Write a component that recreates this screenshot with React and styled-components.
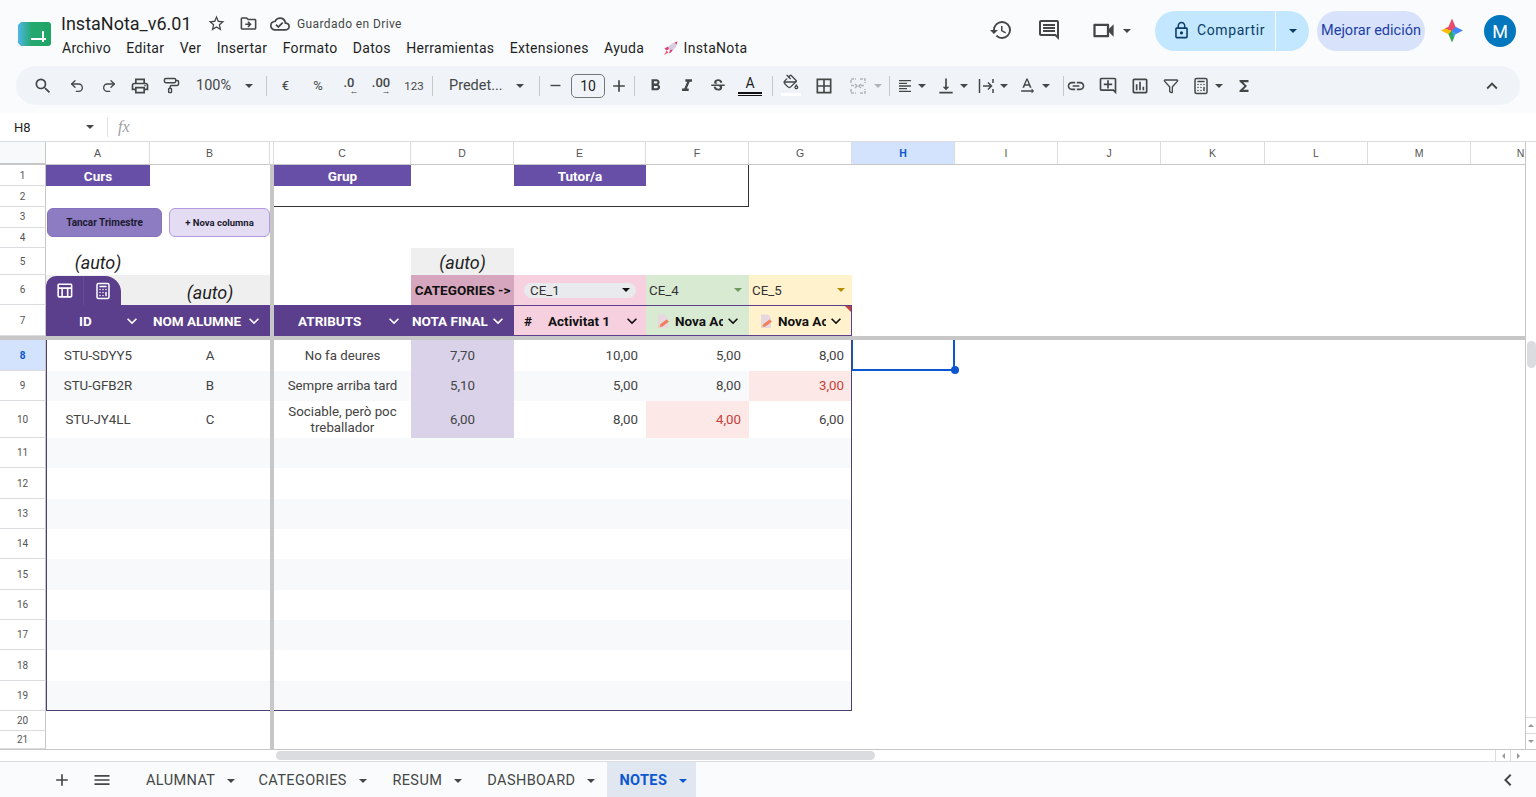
import React from "react";
import styled, { createGlobalStyle } from "styled-components";
import {
  MdSearch, MdOutlinePrint, MdFormatBold, MdFormatItalic,
  MdStrikethroughS, MdBorderAll, MdFormatAlignLeft, MdVerticalAlignBottom,
  MdTextRotationNone, MdLink, MdOutlineAddComment, MdOutlineInsertChart,
  MdFunctions, MdExpandLess, MdExpandMore, MdHistory, MdOutlineComment,
  MdOutlineVideocam, MdLockOutline, MdStarBorder, MdOutlineDriveFileMove, MdOutlineCloudDone,
  MdAdd, MdMenu, MdChevronLeft, MdRemove, MdOutlineTableChart,
} from "react-icons/md";
import { Undo2, Redo2, PaintRoller, PaintBucket, Calculator, Filter } from "lucide-react";

const GlobalStyle = createGlobalStyle`
  html, body { margin: 0; height: 100%; overflow: hidden; background: #f9fbfd; }
  * { box-sizing: border-box; }
  #root { height: 797px; font-family: Roboto, "Liberation Sans", sans-serif; color: #444746; }
`;

const Page = styled.div`
  width: 1536px;
  height: 797px;
  display: flex;
  flex-direction: column;
  overflow: hidden;
`;

/* top bar */
const Header = styled.header`
  height: 66px;
  flex: none;
  display: flex;
  align-items: flex-start;
  padding-left: 17px;
`;
const Logo = styled.svg`
  width: 35px;
  height: 26px;
  margin: 21px 9px 0 0;
  flex: none;
`;
const TitleBlock = styled.div`
  padding-top: 12px;
`;
const TitleRow = styled.div`
  display: flex;
  align-items: center;
  height: 23px;
`;
const DocTitle = styled.div`
  font-size: 18px;
  color: #1f1f1f;
  width: 146px;
`;
const TitleIcon = styled.span`
  display: flex;
  font-size: ${(p) => p.$size || 19}px;
  width: ${(p) => p.$w}px;
  color: #444746;
`;
const SavedText = styled.span`
  font-size: 12px;
  letter-spacing: 0.4px;
  color: #444746;
`;
const MenuRow = styled.nav`
  display: flex;
  align-items: center;
  height: 24px;
  margin-top: 1px;
  gap: 15.4px;
  font-size: 14px;
  letter-spacing: 0.3px;
  color: #1f1f1f;
  padding-left: 1px;
`;
const RocketItem = styled.span`
  display: flex;
  align-items: center;
  gap: 5px;
  margin-left: 3px;
`;
const HeaderRight = styled.div`
  margin-left: auto;
  display: flex;
  align-items: center;
  height: 40px;
  margin-top: 11px;
  padding-right: 20px;
`;
const HeaderIcon = styled.span`
  display: flex;
  justify-content: center;
  font-size: ${(p) => p.$size || 24}px;
  color: #444746;
  width: ${(p) => p.$w}px;
  margin: -2px ${(p) => p.$mr || 0}px 0 0;
`;
const ShareButton = styled.div`
  width: 154px;
  height: 40px;
  display: flex;
  align-items: center;
  background: #c2e7ff;
  border-radius: 20px;
  color: #001d35;
  font-size: 14px;
  letter-spacing: 0.6px;
  margin-left: 24px;
`;
const ShareMain = styled.div`
  width: 121px;
  height: 40px;
  display: flex;
  align-items: center;
  gap: 6px;
  padding: 0 0 2px 17px;
  border-right: 1px solid #f4faff;
  color: #0b3d66;
  svg { font-size: 19px; }
`;
const ShareCaret = styled.div`
  flex: 1;
  display: flex;
  justify-content: center;
`;
const ImproveButton = styled.div`
  width: 108px;
  height: 40px;
  margin-left: 8px;
  padding-bottom: 1px;
  border-radius: 20px;
  background: #d9e2fb;
  color: #1a3fa8;
  font-size: 14.5px;
  display: flex;
  align-items: center;
  justify-content: center;
  white-space: nowrap;
`;
const GeminiStar = styled.span`
  width: 22px;
  height: 24px;
  margin: -1px 21px 0 16px;
  background: conic-gradient(#ea4b6b 0 40deg, #4285f4 40deg 120deg, #3aa6e8 120deg 165deg, #34a853 165deg 230deg, #fbbc04 230deg 290deg, #ea4b6b 290deg);
  clip-path: polygon(50% 0, 66% 34%, 100% 50%, 66% 66%, 50% 100%, 34% 66%, 0 50%, 34% 34%);
`;
const Avatar = styled.div`
  width: 32px;
  height: 32px;
  border-radius: 50%;
  background: #0277bd;
  color: #fff;
  font-size: 18px;
  display: flex;
  align-items: center;
  justify-content: center;
`;

/* toolbar */
const Toolbar = styled.div`
  height: 39px;
  flex: none;
  margin: 0 16px;
  border-radius: 20px;
  background: #f0f4f9;
  display: flex;
  align-items: center;
  padding-left: 10px;
`;
const Tool = styled.span`
  flex: none;
  width: ${(p) => p.$w || 32}px;
  height: 28px;
  margin-left: ${(p) => p.$ml || 0}px;
  display: flex;
  align-items: center;
  justify-content: ${(p) => p.$start ? "flex-start" : "center"};
  padding-left: ${(p) => p.$pad || 0}px;
  font-size: ${(p) => p.$size || 20}px;
  color: #444746;
`;
const ToolText = styled.span`
  font-size: ${(p) => p.$size || 14}px;
  color: #444746;
`;
const Sep = styled.span`
  flex: none;
  width: 1px;
  height: 20px;
  background: #c7c7c7;
  margin: 0 ${(p) => p.$m || 0}px 0 ${(p) => p.$l ?? p.$m ?? 0}px;
`;
const Caret = styled.span`
  flex: none;
  width: 0;
  height: 0;
  border-left: 4px solid transparent;
  border-right: 4px solid transparent;
  border-top: 4px solid ${(p) => p.$color || "#444746"};
  margin-left: ${(p) => p.$ml || 0}px;
`;
const SizeBox = styled.span`
  width: 34px;
  height: 24px;
  flex: none;
  margin-left: 3px;
  border: 1px solid #747775;
  border-radius: 5px;
  font-size: 14px;
  display: flex;
  align-items: center;
  justify-content: center;
  color: #1f1f1f;
`;
const ColorLetter = styled.span`
  display: flex;
  flex-direction: column;
  align-items: center;
  font-size: 14px;
  line-height: 14px;
  color: #1f1f1f;
`;
const ColorBar = styled.span`
  width: 24px;
  height: 4px;
  border-top: 2px solid #111;
  border-bottom: 1px solid #111;
  margin-top: 2px;
`;
const FillIcon = styled.span`
  display: flex;
  flex-direction: column;
  align-items: center;
  margin-top: -1px;
`;
const WhiteBar = styled.span`
  width: 20px;
  height: 3px;
  margin-top: 3px;
  background: #fff;
`;
const DecimalTool = styled.span`
  display: flex;
  flex-direction: column;
  align-items: center;
  font-size: 13px;
  line-height: 11px;
  font-weight: 500;
`;
const TinyArrow = styled.span`
  font-size: 9px;
  line-height: 6px;
  margin-left: 10px;
`;

/* formula bar */
const FormulaBar = styled.div`
  height: 28px;
  flex: none;
  margin-top: 8px;
  background: #fff;
  display: flex;
  align-items: center;
  padding-left: 14px;
  font-size: 13px;
  color: #1f1f1f;
`;
const NameBox = styled.div`
  width: 80px;
  display: flex;
  align-items: center;
  justify-content: space-between;
`;
const FxLabel = styled.span`
  margin-left: 13px;
  padding-left: 10px;
  border-left: 1px solid #e3e3e3;
  font-family: "Liberation Serif", serif;
  font-style: italic;
  font-size: 16px;
  color: #9aa0a6;
  height: 20px;
  line-height: 20px;
`;

/* sheet */
const SheetArea = styled.div`
  flex: none;
  height: 608px;
  display: flex;
  background: #fff;
`;
const Sheet = styled.div`
  width: 1525px;
  overflow: hidden;
  display: grid;
  border-top: 1px solid #dadce0;
  grid-template-columns: 46px 104px 120px 4px 137px 103px 132px 103px 103px 103px 103px 103px 104px 103px 103px 100px;
  grid-template-rows: 23px 21px 21px 20.5px 20.5px 27px 30px 31px 4px 31px 30px 37px repeat(9, 30.35px) 20px 18px;
  font-size: 13.3px;
  color: #434343;
`;
const at = (p) => `grid-column: ${p.$c}; grid-row: ${p.$r};`;
const Corner = styled.div`
  ${at}
  background: #f8f9fa;
  border-right: 1px solid #c7c7c7;
  border-bottom: 2px solid #c7c7c7;
`;
const ColHead = styled.div`
  ${at}
  background: ${(p) => p.$active ? "#d3e3fd" : "#fff"};
  border-right: 1px solid #dadce0;
  border-bottom: 1px solid #c7c7c7;
  font-family: "Liberation Sans", sans-serif;
  font-size: 10.5px;
  font-weight: ${(p) => p.$active ? 700 : 400};
  color: ${(p) => p.$active ? "#0b57d0" : "#555"};
  display: flex;
  align-items: center;
  justify-content: center;
  overflow: hidden;
`;
const RowHead = styled.div`
  ${at}
  background: ${(p) => p.$active ? "#d3e3fd" : "#fff"};
  border-right: 1px solid #c7c7c7;
  border-bottom: 1px solid #dadce0;
  font-size: 10px;
  font-weight: ${(p) => p.$active ? 700 : 400};
  color: ${(p) => p.$active ? "#0b57d0" : "#555"};
  display: flex;
  align-items: center;
  justify-content: center;
`;
const Band = styled.div`
  ${at}
  background: #f8f9fa;
`;
const FreezeCol = styled.div`
  grid-column: 4;
  grid-row: 2 / -1;
  background: #c7c7c7;
  z-index: 3;
`;
const FreezeRow = styled.div`
  grid-column: 1 / -1;
  grid-row: 9;
  background: #c7c7c7;
  z-index: 3;
`;
const TitleCell = styled.div`
  ${at}
  background: #674ea7;
  color: #fff;
  font-weight: 700;
  font-size: 13.5px;
  display: flex;
  align-items: center;
  justify-content: center;
`;
const TopFrame = styled.div`
  grid-column: 5 / 9;
  grid-row: 2 / 4;
  border-right: 1px solid #333;
  border-bottom: 1px solid #333;
`;
const ButtonRow = styled.div`
  grid-column: 2 / 4;
  grid-row: 4 / 6;
  display: flex;
  align-items: flex-start;
  gap: 7px;
  padding: 1px 0 0 1px;
`;
const SheetButton = styled.div`
  width: ${(p) => p.$w}px;
  height: 29px;
  background: ${(p) => p.$light ? "#e3dcf2" : "#8e7cc3"};
  border: 1px solid ${(p) => p.$light ? "#b49ae0" : "#8470bd"};
  border-radius: 6px;
  color: #1a1a2e;
  font-size: ${(p) => p.$light ? 9.5 : 10}px;
  font-weight: 700;
  display: flex;
  align-items: center;
  justify-content: center;
  white-space: nowrap;
`;
const AutoCell = styled.div`
  ${at}
  background: ${(p) => p.$grey ? "#efefef" : "transparent"};
  font-style: italic;
  font-size: 18px;
  color: #1f1f1f;
  display: flex;
  align-items: flex-end;
  justify-content: center;
  line-height: 22px;
  padding-bottom: 1px;
`;
const IconTabCell = styled.div`
  ${at}
  background: #efefef;
  display: flex;
  align-items: flex-end;
`;
const IconTab = styled.div`
  width: 75px;
  height: 29px;
  background: #5b3f8c;
  border-radius: 10px 16px 0 0;
  display: flex;
  color: #fff;
  font-size: 19px;
`;
const IconTabItem = styled.span`
  flex: 1;
  display: flex;
  align-items: center;
  justify-content: center;
  & + & { border-left: 1px solid #65499a; }
`;
const HeadCell = styled.div`
  ${at}
  background: #5b3f8c;
  color: #fff;
  font-weight: 700;
  font-size: 13.5px;
  display: flex;
  align-items: center;
  justify-content: space-between;
  padding: 0 ${(p) => p.$pr}px 0 ${(p) => p.$pl}px;
  white-space: nowrap;
  svg { font-size: 20px; flex: none; }
`;
const ActivityHead = styled.div`
  ${at}
  background: ${(p) => p.$bg};
  border-top: 1px solid #5b3f8c;
  border-bottom: 1px solid #5b3f8c;
  border-right: ${(p) => p.$last ? "1px solid #5b3f8c" : "none"};
  color: #111;
  font-weight: 700;
  font-size: 13.5px;
  display: flex;
  align-items: center;
  padding-left: ${(p) => p.$pl}px;
  position: relative;
  svg.chev { font-size: 20px; flex: none; }
`;
const ActivityName = styled.span`
  width: ${(p) => p.$w}px;
  margin-left: ${(p) => p.$ml || 0}px;
  overflow: hidden;
  white-space: nowrap;
  flex: none;
`;
const Hash = styled.span`
  width: 24px;
  flex: none;
`;
const NoteTriangle = styled.span`
  position: absolute;
  top: 0;
  right: 0;
  width: 0;
  height: 0;
  border-top: 6px solid #c9403a;
  border-left: 6px solid transparent;
`;
const CategoryHead = styled.div`
  ${at}
  background: #d5a6bd;
  color: #111;
  font-weight: 700;
  font-size: 13.5px;
  display: flex;
  align-items: center;
  justify-content: center;
  white-space: nowrap;
`;
const CategoryCell = styled.div`
  ${at}
  background: ${(p) => p.$bg};
  color: #333;
  display: flex;
  align-items: center;
  justify-content: space-between;
  padding: 0 7px 0 3px;
`;
const CategoryPill = styled.div`
  ${at}
  background: #f6d0df;
  display: flex;
  align-items: center;
`;
const Pill = styled.span`
  width: 112px;
  height: 15px;
  margin-left: 10px;
  padding: 0 6px;
  border-radius: 8px;
  background: #e8eaed;
  color: #333;
  display: flex;
  align-items: center;
  justify-content: space-between;
`;
const DataCell = styled.div`
  ${at}
  background: ${(p) => p.$fail ? "#fce8e6" : p.$final ? "#d9d2e9" : "transparent"};
  color: ${(p) => p.$fail ? "#c5403a" : "#434343"};
  display: flex;
  align-items: center;
  justify-content: ${(p) => p.$num ? "flex-end" : "center"};
  text-align: center;
  line-height: 16px;
  padding: ${(p) => p.$num ? "0 8px 0 0" : "0 8px"};
  z-index: 1;
`;
const TableFrame = styled.div`
  grid-column: 2 / 10;
  grid-row: 10 / 22;
  border: 1px solid #4a4170;
  border-top: none;
  z-index: 2;
  pointer-events: none;
`;
const Selection = styled.div`
  grid-column: 10;
  grid-row: 10;
  border: 2px solid #0b57d0;
  border-top: none;
  border-left-width: 1px;
  position: relative;
  z-index: 4;
  &::after {
    content: "";
    position: absolute;
    right: -6px;
    bottom: -5px;
    width: 8px;
    height: 8px;
    border-radius: 50%;
    background: #0b57d0;
  }
`;

const VScroll = styled.div`
  width: 11px;
  flex: none;
  background: #fff;
  border-left: 1px solid #c7c7c7;
  display: flex;
  flex-direction: column;
  align-items: center;
  border-top: 1px solid #dadce0;
`;
const VSpacer = styled.div`
  height: 199px;
  flex: none;
`;
const VThumb = styled.div`
  width: 9px;
  height: 27px;
  flex: none;
  border-radius: 5px;
  background: #dadce0;
`;
const VArrows = styled.div`
  margin-top: auto;
  width: 100%;
`;
const ScrollArrow = styled.div`
  height: 16px;
  display: flex;
  align-items: center;
  justify-content: center;
  border-top: 1px solid #dadce0;
`;
const MiniCaret = styled.span`
  width: 0;
  height: 0;
  border-left: 3px solid transparent;
  border-right: 3px solid transparent;
  border-top: ${(p) => p.$up ? "none" : "3px solid #999"};
  border-bottom: ${(p) => p.$up ? "3px solid #999" : "none"};
`;
const MiniSide = styled.span`
  width: 0;
  height: 0;
  border-top: 3px solid transparent;
  border-bottom: 3px solid transparent;
  border-right: ${(p) => p.$left ? "3px solid #999" : "none"};
  border-left: ${(p) => p.$left ? "none" : "3px solid #999"};
`;
const HScroll = styled.div`
  height: 13px;
  flex: none;
  background: #fff;
  border-top: 1px solid #c7c7c7;
  border-bottom: 1px solid #dadce0;
  display: flex;
  align-items: center;
  padding-left: 276px;
`;
const HThumb = styled.div`
  width: 599px;
  height: 9px;
  border-radius: 5px;
  background: #dadce0;
`;
const HArrows = styled.div`
  margin-left: auto;
  display: flex;
  height: 100%;
  margin-right: 11px;
`;
const HArrow = styled.div`
  width: 15px;
  border-left: 1px solid #dadce0;
  display: flex;
  align-items: center;
  justify-content: center;
`;

/* sheet tabs */
const TabBar = styled.div`
  flex: 1;
  display: flex;
  align-items: stretch;
  background: #f9fbfd;
  padding-left: 51px;
`;
const TabIcon = styled.span`
  display: flex;
  align-items: center;
  justify-content: center;
  font-size: 20px;
  width: ${(p) => p.$w}px;
  color: #444746;
`;
const TabGap = styled.span`
  width: 3px;
  flex: none;
`;
const Tab = styled.div`
  display: flex;
  align-items: center;
  gap: 12px;
  padding: 2px ${(p) => p.$pr}px 0 12px;
  font-size: 14.5px;
  letter-spacing: 0.4px;
  font-weight: ${(p) => p.$active ? 700 : 400};
  color: ${(p) => p.$active ? "#0b57d0" : "#444746"};
  background: ${(p) => p.$active ? "#e1e7f0" : "transparent"};
`;
const TabCollapse = styled.span`
  margin-left: auto;
  display: flex;
  align-items: center;
  padding-right: 16px;
  font-size: 24px;
  color: #444746;
`;

const Rocket = () => (
  <svg width="16" height="16" viewBox="0 0 16 16">
    <path d="M9 3.500L14.500 1.500 13 7 8.500 12 4 8z" fill="#d8cbe0" />
    <path d="M11.500 2.500l3-1-1 3z" fill="#e0455a" />
    <path d="M5 6.500L1.500 8.500 3.500 10.500 6 9z M7 10l-1 3.500 2.500-1.500 1-2.500z" fill="#e0407a" />
    <path d="M3.500 10.500L1 15l4.500-2.500z" fill="#ef5a7a" />
  </svg>
);

const NoteIcon = () => (
  <svg width="14" height="16" viewBox="0 0 14 16" style={{ flex: "none" }}>
    <path d="M1 1.500h7l3 3V15H1z" fill="#e6d8de" />
    <path d="M3 11.500l6.500-5 2.500 2-6.500 5-3 .5z" fill="#ef7f5f" />
    <path d="M1 13l2-1 .5 2.500H1z" fill="#f3c7a0" />
  </svg>
);

const MergeIcon = () => (
  <svg width="18" height="18" viewBox="0 0 18 18" fill="none" stroke="#b1b4b8" strokeWidth="1.500">
    <path d="M2 6V2h5M11 2h5v4M2 12v4h5M11 16h5v-4M2 8.500h4M12 8.500h4" strokeDasharray="3 1" />
    <path d="M6 7l2 2-2 2M12 7l-2 2 2 2" />
  </svg>
);

const WrapIcon = () => (
  <svg width="20" height="20" viewBox="0 0 20 20" fill="none" stroke="#444746" strokeWidth="1.500">
    <path d="M3.500 3v14M7 10h8M12 6.500l3.500 3.500-3.500 3.500M17 3v4M17 13v4" />
  </svg>
);

const columns = ["A", "B", "C", "D", "E", "F", "G", "H", "I", "J", "K", "L", "M", "N"];
const colLine = { A: 2, B: 3, C: 5, D: 6, E: 7, F: 8, G: 9, H: 10, I: 11, J: 12, K: 13, L: 14, M: 15, N: 16 };
const rowLine = (n) => (n <= 7 ? n + 1 : n + 2);
const rowNumbers = Array.from({ length: 21 }, (_, i) => i + 1);
const bandRows = [9, 11, 13, 15, 17, 19];

const students = [
  { row: 8, id: "STU-SDYY5", name: "A", note: "No fa deures", final: "7,70", marks: [["10,00"], ["5,00"], ["8,00"]] },
  { row: 9, id: "STU-GFB2R", name: "B", note: "Sempre arriba tard", final: "5,10", marks: [["5,00"], ["8,00"], ["3,00", true]] },
  { row: 10, id: "STU-JY4LL", name: "C", note: "Sociable, però poc treballador", final: "6,00", marks: [["8,00"], ["4,00", true], ["6,00"]] },
];

const tabs = [
  { name: "ALUMNAT", pr: 11 },
  { name: "CATEGORIES", pr: 13.5 },
  { name: "RESUM", pr: 13 },
  { name: "DASHBOARD", pr: 12 },
  { name: "NOTES", pr: 9, active: true },
];

export default function App() {
  return (
    <Page>
      <GlobalStyle />
      <Header>
        <Logo viewBox="0 0 35 26">
          <defs>
            <linearGradient id="logoFill" x1="0" x2="1" y1="0" y2="0">
              <stop offset="0" stopColor="#4db6e8" />
              <stop offset="0.4" stopColor="#26a971" />
              <stop offset="1" stopColor="#1fa463" />
            </linearGradient>
          </defs>
          <path d="M4 1h27a3 3 0 0 1 3 3v18a3 3 0 0 1-3 3H4l-3-3V4z" fill="url(#logoFill)" />
          <path d="M14 18h15M26 10v11" stroke="#fff" strokeWidth="2" fill="none" />
        </Logo>
        <TitleBlock>
          <TitleRow>
            <DocTitle>InstaNota_v6.01</DocTitle>
            <TitleIcon $w={32}><MdStarBorder /></TitleIcon>
            <TitleIcon $w={31}><MdOutlineDriveFileMove /></TitleIcon>
            <TitleIcon $w={27} $size={20}><MdOutlineCloudDone /></TitleIcon>
            <SavedText>Guardado en Drive</SavedText>
          </TitleRow>
          <MenuRow>
            {["Archivo", "Editar", "Ver", "Insertar", "Formato", "Datos", "Herramientas", "Extensiones", "Ayuda"].map((m) => (
              <span key={m}>{m}</span>
            ))}
            <RocketItem><Rocket />InstaNota</RocketItem>
          </MenuRow>
        </TitleBlock>
        <HeaderRight>
          <HeaderIcon $w={48}><MdHistory /></HeaderIcon>
          <HeaderIcon $w={48} $mr={10}><MdOutlineComment /></HeaderIcon>
          <HeaderIcon $w={40} $size={27}><MdOutlineVideocam /></HeaderIcon>
          <Caret />
          <ShareButton>
            <ShareMain><MdLockOutline />Compartir</ShareMain>
            <ShareCaret><Caret $color="#0b3d66" /></ShareCaret>
          </ShareButton>
          <ImproveButton>Mejorar edición</ImproveButton>
          <GeminiStar />
          <Avatar>M</Avatar>
        </HeaderRight>
      </Header>

      <Toolbar>
        <Tool $w={34}><MdSearch /></Tool>
        <Tool $w={34}><Undo2 size={16} /></Tool>
        <Tool $w={30}><Redo2 size={16} /></Tool>
        <Tool $w={32}><MdOutlinePrint /></Tool>
        <Tool $w={31}><PaintRoller size={17} /></Tool>
        <Tool $w={75} $start $pad={9}>
          <ToolText $size={14.5}>100%</ToolText>
          <Caret $ml={14} />
        </Tool>
        <Sep $m={4} />
        <Tool $w={29}><ToolText $size={13}>€</ToolText></Tool>
        <Tool $w={36}><ToolText $size={13}>%</ToolText></Tool>
        <Tool $w={26}><DecimalTool>.0<TinyArrow>←</TinyArrow></DecimalTool></Tool>
        <Tool $w={38}><DecimalTool>.00<TinyArrow>→</TinyArrow></DecimalTool></Tool>
        <Tool $w={28}><ToolText $size={11.5}>123</ToolText></Tool>
        <Sep $m={4} />
        <Tool $w={100} $start $pad={12}>
          <ToolText $size={14.5}>Predet...</ToolText>
          <Caret $ml={13} />
        </Tool>
        <Sep $m={2} />
        <Tool $w={26}><MdRemove size={17} /></Tool>
        <SizeBox>10</SizeBox>
        <Tool $w={28}><MdAdd size={20} /></Tool>
        <Sep $m={1} />
        <Tool $w={38} $size={19}><MdFormatBold /></Tool>
        <Tool $w={26}><MdFormatItalic /></Tool>
        <Tool $w={36} $size={18}><MdStrikethroughS /></Tool>
        <Tool $w={28}><ColorLetter>A<ColorBar /></ColorLetter></Tool>
        <Sep $m={8} />
        <Tool $w={20}><FillIcon><PaintBucket size={16} /><WhiteBar /></FillIcon></Tool>
        <Tool $w={46}><MdBorderAll /></Tool>
        <Tool $w={22}><MergeIcon /></Tool>
        <Caret $color="#b1b4b8" $ml={5} />
        <Sep $m={7} />
        <Tool $w={16}><MdFormatAlignLeft /></Tool>
        <Caret $ml={5} />
        <Tool $w={28} $ml={6}><MdVerticalAlignBottom /></Tool>
        <Caret />
        <Tool $w={30} $ml={3}><WrapIcon /></Tool>
        <Caret $ml={-1} />
        <Tool $w={30} $ml={4}><MdTextRotationNone /></Tool>
        <Caret />
        <Sep $l={13} />
        <Tool $w={24}><MdLink /></Tool>
        <Tool $w={40}><MdOutlineAddComment /></Tool>
        <Tool $w={24}><MdOutlineInsertChart /></Tool>
        <Tool $w={38}><Filter size={16} /></Tool>
        <Tool $w={22}><Calculator size={18} /></Tool>
        <Caret $ml={3} />
        <Tool $w={42} $size={18}><MdFunctions /></Tool>
        <Tool $w={32} $size={22} style={{ marginLeft: "auto", marginRight: 12 }}><MdExpandLess /></Tool>
      </Toolbar>

      <FormulaBar>
        <NameBox>H8<Caret $color="#444746" /></NameBox>
        <FxLabel>fx</FxLabel>
      </FormulaBar>

      <SheetArea>
        <Sheet>
          <Corner $c={1} $r={1} />
          {columns.map((c) => (
            <ColHead key={c} $c={colLine[c]} $r={1} $active={c === "H"}>{c}</ColHead>
          ))}
          <ColHead $c={4} $r={1} />
          {rowNumbers.map((n) => (
            <RowHead key={n} $c={1} $r={rowLine(n)} $active={n === 8}>{n}</RowHead>
          ))}

          {bandRows.map((n) => (
            <Band key={n} $c="2 / 10" $r={rowLine(n)} />
          ))}

          <TitleCell $c={2} $r={2}>Curs</TitleCell>
          <TitleCell $c={5} $r={2}>Grup</TitleCell>
          <TitleCell $c={7} $r={2}>Tutor/a</TitleCell>
          <TopFrame />

          <ButtonRow>
            <SheetButton $w={115}>Tancar Trimestre</SheetButton>
            <SheetButton $w={101} $light>+ Nova columna</SheetButton>
          </ButtonRow>

          <AutoCell $c={2} $r={6}>(auto)</AutoCell>
          <AutoCell $c={6} $r={6} $grey>(auto)</AutoCell>
          <IconTabCell $c={2} $r={7}>
            <IconTab>
              <IconTabItem><MdOutlineTableChart /></IconTabItem>
              <IconTabItem><Calculator size={18} /></IconTabItem>
            </IconTab>
          </IconTabCell>
          <AutoCell $c={3} $r={7} $grey>(auto)</AutoCell>

          <CategoryHead $c={6} $r={7}>CATEGORIES -&gt;</CategoryHead>
          <CategoryPill $c={7} $r={7}>
            <Pill>CE_1<Caret $color="#111" /></Pill>
          </CategoryPill>
          <CategoryCell $c={8} $r={7} $bg="#d9ead3">CE_4<Caret $color="#6f9a5e" /></CategoryCell>
          <CategoryCell $c={9} $r={7} $bg="#fff2cc">CE_5<Caret $color="#b38f00" /></CategoryCell>

          <HeadCell $c={2} $r={8} $pl={33} $pr={8}>ID<MdExpandMore /></HeadCell>
          <HeadCell $c={3} $r={8} $pl={3} $pr={6}>NOM ALUMNE<MdExpandMore /></HeadCell>
          <HeadCell $c={5} $r={8} $pl={24} $pr={7}>ATRIBUTS<MdExpandMore /></HeadCell>
          <HeadCell $c={6} $r={8} $pl={1} $pr={7}>NOTA FINAL<MdExpandMore /></HeadCell>
          <ActivityHead $c={7} $r={8} $bg="#f6d0df" $pl={10}>
            <Hash>#</Hash>
            <ActivityName $w={74}>Activitat 1</ActivityName>
            <MdExpandMore className="chev" />
          </ActivityHead>
          <ActivityHead $c={8} $r={8} $bg="#d9ead3" $pl={11}>
            <NoteIcon />
            <ActivityName $w={48} $ml={4}>Nova Activitat</ActivityName>
            <MdExpandMore className="chev" />
          </ActivityHead>
          <ActivityHead $c={9} $r={8} $bg="#fff2cc" $pl={11} $last>
            <NoteIcon />
            <ActivityName $w={48} $ml={4}>Nova Activitat</ActivityName>
            <MdExpandMore className="chev" />
            <NoteTriangle />
          </ActivityHead>

          {students.map((s) => (
            <React.Fragment key={s.id}>
              <DataCell $c={2} $r={rowLine(s.row)}>{s.id}</DataCell>
              <DataCell $c={3} $r={rowLine(s.row)}>{s.name}</DataCell>
              <DataCell $c={5} $r={rowLine(s.row)}>{s.note}</DataCell>
              <DataCell $c={6} $r={rowLine(s.row)} $final>{s.final}</DataCell>
              {s.marks.map(([value, fail], i) => (
                <DataCell key={i} $c={7 + i} $r={rowLine(s.row)} $num $fail={fail}>{value}</DataCell>
              ))}
            </React.Fragment>
          ))}

          <TableFrame />
          <Selection />
          <FreezeCol />
          <FreezeRow />
        </Sheet>
        <VScroll>
          <VSpacer />
          <VThumb />
          <VArrows>
            <ScrollArrow><MiniCaret $up /></ScrollArrow>
            <ScrollArrow><MiniCaret /></ScrollArrow>
          </VArrows>
        </VScroll>
      </SheetArea>

      <HScroll>
        <HThumb />
        <HArrows>
          <HArrow><MiniSide $left /></HArrow>
          <HArrow><MiniSide /></HArrow>
        </HArrows>
      </HScroll>

      <TabBar>
        <TabIcon $w={22}><MdAdd /></TabIcon>
        <TabIcon $w={58}><MdMenu /></TabIcon>
        <TabGap />
        {tabs.map((t) => (
          <Tab key={t.name} $pr={t.pr} $active={t.active}>
            {t.name}
            <Caret $color={t.active ? "#0b57d0" : "#444746"} />
          </Tab>
        ))}
        <TabCollapse><MdChevronLeft /></TabCollapse>
      </TabBar>
    </Page>
  );
}
